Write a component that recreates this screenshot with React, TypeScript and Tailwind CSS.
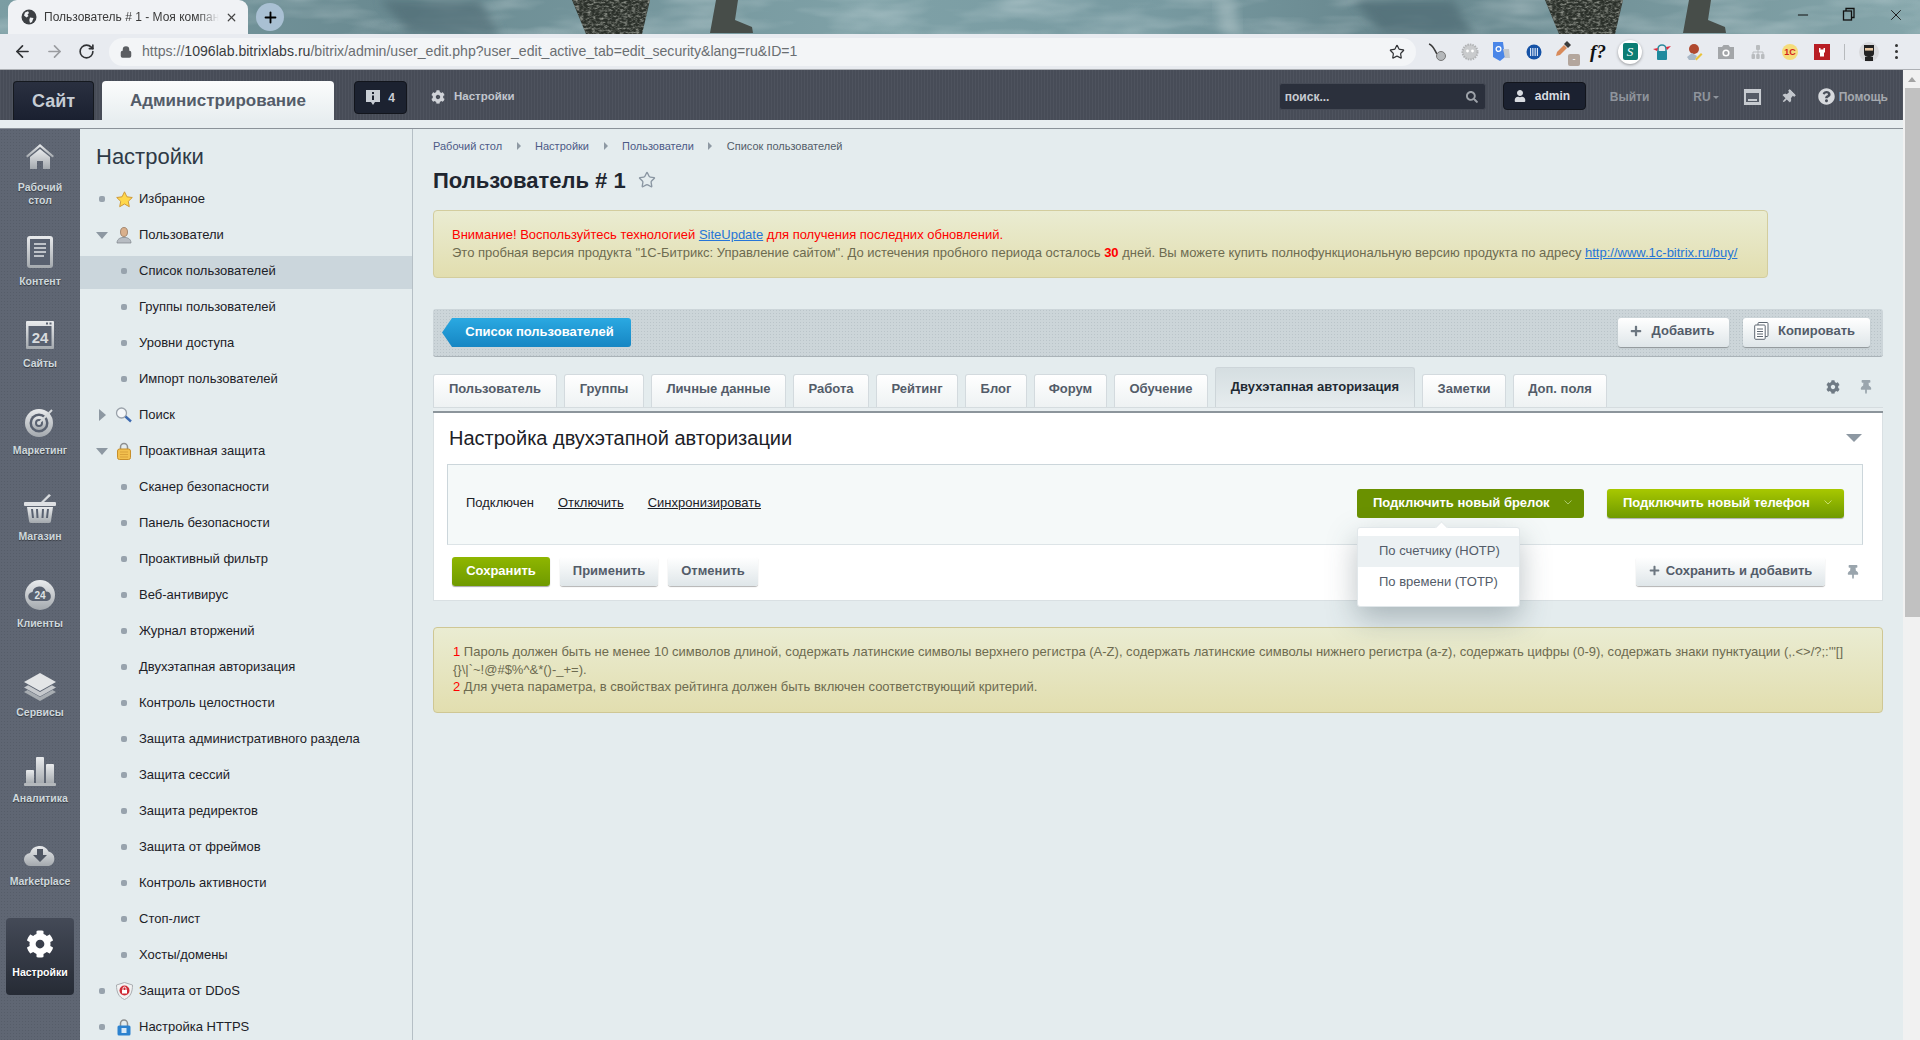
import type { ReactNode } from 'react';
import { ArrowLeft, ArrowRight, RotateCw, Lock, Star, X, Plus, Minus } from 'lucide-react';
import { FaCog, FaThumbtack, FaUser, FaSearch, FaQuestionCircle, FaPlus } from 'react-icons/fa';

const Arial = '[font-family:"Liberation_Sans",Arial,sans-serif]';

// chrome theme picture, one tile is repeated along the strip
function ThemeArt() {
  return (
    <svg className="w-full h-full" viewBox="0 0 1920 34" preserveAspectRatio="none">
      <defs>
        <linearGradient id="sky" x1="0" y1="0" x2="1" y2="0">
          <stop offset="0" stopColor="#7b9da3" />
          <stop offset="0.2" stopColor="#6a8a91" />
          <stop offset="0.45" stopColor="#7fa1a7" />
          <stop offset="0.6" stopColor="#789aa1" />
          <stop offset="0.72" stopColor="#68878e" />
          <stop offset="1" stopColor="#84a5aa" />
        </linearGradient>
        <filter id="soft">
          <feGaussianBlur stdDeviation="5" />
        </filter>
        <filter id="feather" x="0" y="0" width="100%" height="100%">
          <feTurbulence type="fractalNoise" baseFrequency="0.25 0.5" numOctaves="2" seed="4" />
          <feColorMatrix values="0 0 0 0 0.45  0 0 0 0 0.47  0 0 0 0 0.42  1.8 0 0 0 -0.75" />
          <feComposite in2="SourceAlpha" operator="in" />
        </filter>
        <filter id="mottle" x="0" y="0" width="100%" height="100%">
          <feTurbulence type="fractalNoise" baseFrequency="0.012 0.05" numOctaves="3" seed="9" />
          <feColorMatrix values="0 0 0 0 0.85  0 0 0 0 0.92  0 0 0 0 0.93  1.4 0 0 0 -0.55" />
        </filter>
      </defs>
      <rect width="1920" height="34" fill="url(#sky)" />
      <rect width="1920" height="34" filter="url(#mottle)" opacity="0.45" />
      {[0, 973].map((dx) => (
        <g key={dx} transform={`translate(${dx} 0)`}>
          <polygon points="380,0 480,0 500,34 410,34" fill="#4f6c75" opacity="0.7" filter="url(#soft)" />
          <polygon points="572,0 650,0 642,34 586,34" fill="#2b302a" />
          <polygon points="572,0 650,0 642,34 586,34" fill="#000" filter="url(#feather)" />
          <polygon points="716,0 738,0 735,20 752,27 753,33 710,33 712,22" fill="#474d49" />
          <polygon points="1215,0 1235,0 1240,34 1222,34" fill="#b4c8cb" opacity="0.5" filter="url(#soft)" />
        </g>
      ))}
    </svg>
  );
}

function BrowserTab() {
  return (
    <div className="relative h-[34px] overflow-hidden">
      <div className="absolute inset-0">
        <ThemeArt />
      </div>
      <div className="absolute inset-0 flex items-end pl-[8px]">
        <div className="w-[240px] h-[34px] bg-[#f0f2f5] rounded-t-[9px] flex items-center pl-[13px] pr-[10px]">
          <svg width="16" height="16" viewBox="0 0 16 16">
            <circle cx="8" cy="8" r="7.5" fill="#3c3f43" />
            <path d="M4 3.5l3-1.2 1 1.6-1.500 1.600L7.500 7 5.500 8.500 3 6.500zM9 8.500l3.500.4L11 13l-2 1-.7-3z" fill="#f0f2f5" />
          </svg>
          <span className={`ml-[7px] w-[175px] text-[12px] text-[#3a3a3a] whitespace-nowrap [mask-image:linear-gradient(90deg,#000_88%,transparent)] ${Arial}`}>
            Пользователь # 1 - Моя компан
          </span>
          <X size={13} className="ml-auto text-[#444]" strokeWidth={2.2} />
        </div>
        <div className="ml-[8px] mb-[3px] w-[28px] h-[28px] rounded-full bg-[#a9c0d3] flex items-center justify-center">
          <Plus size={17} strokeWidth={2.6} className="text-black" />
        </div>
        <div className="ml-auto h-[34px] flex items-start pt-[6px] pr-[15px] gap-[31px] text-[#111]">
          <Minus size={16} strokeWidth={1.5} className="mt-[1px]" />
          <svg width="14" height="16" viewBox="0 0 14 16" className="mt-[1px]" fill="none" stroke="#111" strokeWidth="1.3">
            <rect x="1.5" y="4" width="8" height="9" />
            <path d="M4 4V1.5h8v9h-2.5" />
          </svg>
          <X size={18} strokeWidth={1.2} />
        </div>
      </div>
    </div>
  );
}

// the row of extension buttons, each box is 32px wide
function Extensions() {
  return (
    <div className="flex items-center ml-[6px]">
      <ExtBox>
        <svg width="20" height="20" viewBox="0 0 20 20" fill="none">
          <path d="M1 2c4 1 5 5 8 10" stroke="#3a3a3a" strokeWidth="1.6" />
          <circle cx="13" cy="14" r="4.5" fill="#b4b7ba" stroke="#777" />
        </svg>
      </ExtBox>
      <ExtBox>
        <svg width="18" height="18" viewBox="0 0 18 18">
          <circle cx="9" cy="9" r="7.5" fill="#c9cbcd" stroke="#b0b2b4" strokeDasharray="1.5 1" strokeWidth="2" />
          <circle cx="6.5" cy="8" r="1.4" fill="#fff" />
          <circle cx="11.5" cy="8" r="1.4" fill="#fff" />
        </svg>
      </ExtBox>
      <ExtBox>
        <svg width="18" height="20" viewBox="0 0 18 20">
          <path d="M0 0h10l2 15-5 4-7-4z" fill="#4a86e8" />
          <path d="M10 7h6l1 9H12z" fill="#c5c9cd" />
          <circle cx="5.5" cy="7" r="2.4" fill="none" stroke="#fff" strokeWidth="1.3" />
        </svg>
      </ExtBox>
      <ExtBox>
        <svg width="16" height="16" viewBox="0 0 16 16">
          <circle cx="8" cy="8" r="7.5" fill="#1552a6" />
          <path d="M4 4h8v8H4z" fill="#d8e4f5" />
          <path d="M5.7 4v8M8 4v8M10.3 4v8" stroke="#1552a6" strokeWidth="1.1" />
        </svg>
      </ExtBox>
      <ExtBox>
        <div className="relative w-[22px] h-[22px]">
          <svg width="16" height="16" viewBox="0 0 16 16">
            <path d="M1 15l1-4 7-7 3 3-7 7z" fill="#d88a5a" />
            <path d="M9 3l3-3 4 4-3 3z" fill="#3b3b3b" />
          </svg>
          <span className={`absolute right-[-3px] bottom-[-3px] w-[12px] h-[12px] rounded-[2px] bg-[#b3a69d] text-white text-[9px] leading-[11px] text-center ${Arial}`}>-</span>
        </div>
      </ExtBox>
      <ExtBox>
        <span className="text-[19px] italic text-[#111] [font-family:'Liberation_Serif',serif] font-bold leading-none">f?</span>
      </ExtBox>
      <ExtBox>
        <div className="w-[24px] h-[24px] rounded-full bg-white shadow-[0_1px_3px_rgba(0,0,0,.35)] flex items-center justify-center">
          <span className="w-[15px] h-[17px] rounded-[2px] bg-[#0b7d73] text-white text-[13px] leading-[17px] text-center italic [font-family:'Liberation_Serif',serif]">S</span>
        </div>
      </ExtBox>
      <ExtBox>
        <svg width="18" height="18" viewBox="0 0 18 18">
          <path d="M5 9V6a4 4 0 0 1 8 0v3" fill="none" stroke="#2a8a9c" strokeWidth="1.6" />
          <rect x="4" y="8" width="10" height="9" rx="1" fill="#1f8a9e" />
          <path d="M0 6l5-1-1 3zM18 3l-5 1 1 3z" fill="#e0293a" />
        </svg>
      </ExtBox>
      <ExtBox>
        <svg width="18" height="18" viewBox="0 0 18 18">
          <circle cx="9" cy="6" r="5" fill="#b0492f" />
          <path d="M2 14l5-4 5 3-2 4H4z" fill="#a9b8c7" />
          <path d="M10 16l6-6 1.5 1.5-6 6z" fill="#e9c33c" />
        </svg>
      </ExtBox>
      <ExtBox>
        <svg width="18" height="16" viewBox="0 0 18 16">
          <path d="M1 3h4l1.5-2h5L13 3h4v12H1z" fill="#a3a6a9" />
          <circle cx="9" cy="9" r="3.6" fill="#fff" />
          <circle cx="9" cy="9" r="2" fill="#a3a6a9" />
        </svg>
      </ExtBox>
      <ExtBox>
        <svg width="14" height="16" viewBox="0 0 14 16" fill="#b9bcbf">
          <rect x="5" y="1" width="4" height="5" rx="1" />
          <rect x="0.5" y="10" width="3.5" height="5" rx="1" />
          <rect x="5.2" y="10" width="3.5" height="5" rx="1" />
          <rect x="10" y="10" width="3.5" height="5" rx="1" />
          <path d="M7 6v4M2 10V8h10v2" fill="none" stroke="#b9bcbf" />
        </svg>
      </ExtBox>
      <ExtBox>
        <div className={`w-[16px] h-[16px] rounded-full bg-[#f5dc7a] text-[#d2231c] font-bold text-[9px] leading-[16px] text-center ${Arial}`}>1С</div>
      </ExtBox>
      <ExtBox>
        <svg width="16" height="16" viewBox="0 0 16 16">
          <rect width="16" height="16" fill="#b81d24" />
          <path d="M5 4h1.500v1.500h3V4H11v4l-1 1v3.500H6V9L5 8z" fill="#fff" />
        </svg>
      </ExtBox>
      <div className="w-px h-[16px] bg-[#b7babd] ml-[6px]" />
      <div className="ml-[14px] w-[20px] h-[20px] rounded-full bg-[#d8d9dc] flex items-center justify-center">
        <svg width="14" height="18" viewBox="0 0 14 18">
          <path d="M2 2h10v8c0 3-2 4-5 4s-5-1-5-4z" fill="#222" />
          <rect x="3" y="5" width="8" height="2.6" fill="#e8c9a5" />
          <path d="M3 14h8v4H3z" fill="#222" />
        </svg>
      </div>
      <div className="ml-[16px] flex flex-col gap-[3px]">
        <span className="w-[3px] h-[3px] rounded-full bg-[#333]" />
        <span className="w-[3px] h-[3px] rounded-full bg-[#333]" />
        <span className="w-[3px] h-[3px] rounded-full bg-[#333]" />
      </div>
    </div>
  );
}

function ExtBox({ children }: { children: ReactNode }) {
  return <div className="w-[32px] h-[36px] flex items-center justify-center">{children}</div>;
}

function BrowserBar() {
  return (
    <div className="h-[36px] bg-[#e8ebf0] border-b border-[#adb0b5] flex items-center pl-[13px]">
      <ArrowLeft size={19} strokeWidth={2.1} className="text-[#303235]" />
      <ArrowRight size={19} strokeWidth={2.1} className="ml-[13px] text-[#9a9ca0]" />
      <RotateCw size={17} strokeWidth={2.3} className="ml-[14px] text-[#303235]" />
      <div className="ml-[14px] w-[1307px] h-[28px] rounded-full bg-[#f3f5f7] flex items-center pl-[11px] pr-[10px]">
        <Lock size={12} strokeWidth={3} className="text-[#5b5e62] fill-[#5b5e62]" />
        <span className={`ml-[10px] pt-[1px] text-[14.1px] text-[#6a6e72] whitespace-nowrap ${Arial}`}>
          https://<span className="text-[#3a3c3f]">1096lab.bitrixlabs.ru</span>/bitrix/admin/user_edit.php?user_edit_active_tab=edit_security&amp;lang=ru&amp;ID=1
        </span>
        <Star size={16} strokeWidth={1.8} className="ml-auto mr-[1px] text-[#303235]" />
      </div>
      <Extensions />
    </div>
  );
}

function AdminHeader() {
  return (
    <div className={`h-[50px] flex bg-[#4a4f5a] bg-[repeating-linear-gradient(90deg,#4e535e_0_1px,#474c57_1px_3px)] pl-[13px] pr-[15px] ${Arial}`}>
      <div className="self-end w-[81px] h-[39px] rounded-t-[4px] bg-gradient-to-b from-[#2a3040] to-[#1a2030] border border-b-0 border-[#15191f] flex items-center justify-center text-[18px] font-bold text-[#c6ccd4]">
        Сайт
      </div>
      <div className="self-end ml-[8px] w-[232px] h-[39px] rounded-t-[4px] bg-gradient-to-b from-[#fbfcfc] to-[#e8eef0] flex items-center justify-center text-[17px] font-bold text-[#535c69]">
        Администрирование
      </div>
      <div className="mt-[11px] ml-[20px] w-[53px] h-[33px] rounded-[4px] bg-[#1c2230] border border-[#12151c] flex items-center justify-center gap-[8px] text-[12px] font-bold text-[#c9ced5]">
        <svg width="14" height="17" viewBox="0 0 14 17">
          <path d="M0 1h14v12H9l-2 3-2-3H0z" fill="#c9ced5" />
          <path d="M6 3h2v2H6zM6 6.500h2V11H6z" fill="#1c2230" />
        </svg>
        4
      </div>
      <div className="mt-[10px] ml-[24px] h-[33px] flex items-center text-[11.5px] font-bold text-[#c2c6cd]">
        <FaCog size={14} className="text-[#d0d3d8]" />
        <span className="ml-[9px]">Настройки</span>
      </div>
      <div className="mt-[13px] ml-auto w-[207px] h-[27px] rounded-[3px] bg-[#2b303c] border border-[#454a55] flex items-center pl-[5px] pr-[7px] text-[12px] font-bold text-[#c8ccd2]">
        поиск...
        <FaSearch size={12} className="ml-auto text-[#9da2a9]" />
      </div>
      <div className="mt-[12px] ml-[17px] w-[83px] h-[28px] rounded-[4px] bg-[#1b2130] border border-[#12151c] flex items-center pl-[10px] text-[12px] font-bold text-[#d9dce1]">
        <FaUser size={12} />
        <span className="ml-[9px]">admin</span>
      </div>
      <div className="mt-[20px] ml-[24px] h-[14px] text-[12px] leading-[14px] font-bold text-[#8f949c]">Выйти</div>
      <div className="mt-[20px] ml-[44px] h-[14px] text-[12px] leading-[14px] font-bold text-[#8f949c] flex items-center">
        RU
        <span className="ml-[2px] w-0 h-0 border-x-[3px] border-x-transparent border-t-[3px] border-t-[#8f949c]" />
      </div>
      <div className="mt-[19px] ml-[25px] w-[17px] h-[16px] bg-[#c7cbd0] flex items-center justify-center">
        <div className="w-[13px] h-[9px] bg-[#555b66] flex items-end justify-center pb-[1px]">
          <div className="w-[9px] h-[2px] bg-[#c7cbd0]" />
        </div>
      </div>
      <FaThumbtack size={14} className="mt-[20px] ml-[20px] text-[#c2c6cc] rotate-45" />
      <FaQuestionCircle size={17} className="mt-[18px] ml-[23px] text-[#d6d9dd]" />
      <div className="mt-[20px] ml-[4px] h-[14px] text-[12px] leading-[14px] font-bold text-[#a4a8ae]">Помощь</div>
    </div>
  );
}

// side rail icons
function HomeIcon() {
  return (
    <svg width="30" height="30" viewBox="0 0 30 30">
      <defs>
        <linearGradient id="rail" x1="0" y1="0" x2="0" y2="1">
          <stop offset="0" stopColor="#e9ebed" />
          <stop offset="1" stopColor="#a4a9ae" />
        </linearGradient>
      </defs>
      <path d="M15 2L1 14l1.500 1.500L15 5l12.500 10.500L29 14z" fill="url(#rail)" />
      <path d="M5 15L15 7l10 8v12H18v-8h-6v8H5z" fill="url(#rail)" />
    </svg>
  );
}
function ContentIcon() {
  return (
    <svg width="26" height="32" viewBox="0 0 26 32">
      <rect width="26" height="32" rx="3" fill="url(#rail)" />
      <rect x="3" y="3" width="20" height="26" fill="#596170" />
      <path d="M7 8h12M7 12h12M7 16h12M7 20h10" stroke="#dfe2e5" strokeWidth="1.7" />
    </svg>
  );
}
function SitesIcon() {
  return (
    <svg width="28" height="28" viewBox="0 0 28 28">
      <rect width="28" height="28" rx="1" fill="url(#rail)" />
      <rect x="2.5" y="5" width="23" height="20" fill="#596170" />
      <rect x="20" y="1.5" width="2" height="2" fill="#596170" />
      <rect x="23.5" y="1.5" width="2" height="2" fill="#596170" />
      <text x="14" y="21.5" textAnchor="middle" fontSize="15" fontWeight="700" fill="#d8dbde" fontFamily="Liberation Sans">24</text>
    </svg>
  );
}
function TargetIcon() {
  return (
    <svg width="30" height="30" viewBox="0 0 30 30">
      <circle cx="14" cy="16" r="14" fill="url(#rail)" />
      <circle cx="14" cy="16" r="9.5" fill="#596170" />
      <circle cx="14" cy="16" r="7" fill="url(#rail)" />
      <circle cx="14" cy="16" r="4" fill="#596170" />
      <circle cx="14" cy="16" r="2" fill="#d5d8db" />
      <path d="M14 16L27 3" stroke="#d5d8db" strokeWidth="2" />
    </svg>
  );
}
function BasketIcon() {
  return (
    <svg width="32" height="30" viewBox="0 0 32 30">
      <path d="M16 10L25 1l2 1.500L19 10z" fill="#d8dbde" />
      <rect y="9" width="32" height="4" rx="1" fill="#dfe1e4" />
      <path d="M3 14h26l-2 14a2 2 0 0 1-2 2H7a2 2 0 0 1-2-2z" fill="url(#rail)" />
      <path d="M8 16l1 9M13 16l.5 9M19 16l-.5 9M24 16l-1 9" stroke="#596170" strokeWidth="2" />
    </svg>
  );
}
function CloudBadgeIcon() {
  return (
    <svg width="30" height="30" viewBox="0 0 30 30">
      <circle cx="15" cy="15" r="15" fill="url(#rail)" />
      <path d="M8 21a4.500 4.500 0 0 1-.5-9 7 7 0 0 1 13.500-.5A4.800 4.800 0 0 1 22 21z" fill="#596170" />
      <text x="15" y="19" textAnchor="middle" fontSize="10" fontWeight="700" fill="#dfe1e4" fontFamily="Liberation Sans">24</text>
    </svg>
  );
}
function LayersIcon() {
  return (
    <svg width="32" height="30" viewBox="0 0 32 30">
      <path d="M16 10L32 19 16 28 0 19z" fill="#a8adb2" />
      <path d="M16 6L32 15 16 24 0 15z" fill="#596170" />
      <path d="M16 5.500L32 14.500 16 23.500 0 14.500z" fill="#c6c9cd" />
      <path d="M16 1L32 10 16 19 0 10z" fill="#596170" />
      <path d="M16 0L32 9 16 18 0 9z" fill="#e3e5e7" />
    </svg>
  );
}
function BarsIcon() {
  return (
    <svg width="32" height="30" viewBox="0 0 32 30">
      <rect x="2" y="14" width="8" height="14" rx="1" fill="url(#rail)" />
      <rect x="12" y="1" width="8" height="27" rx="1" fill="url(#rail)" />
      <rect x="22" y="8" width="8" height="20" rx="1" fill="url(#rail)" />
      <rect y="27" width="32" height="3" rx="1" fill="#b4b8bc" />
    </svg>
  );
}
function CloudDownIcon() {
  return (
    <svg width="32" height="24" viewBox="0 0 32 24">
      <path d="M7 23a6.500 6.500 0 0 1-1-13A10 10 0 0 1 24.500 8.500 7.500 7.500 0 0 1 25 23z" fill="url(#rail)" />
      <path d="M13 6h6v6h4l-7 7-7-7h4z" fill="#4f5663" />
    </svg>
  );
}

interface RailItem {
  label: ReactNode;
  icon: ReactNode;
  gap: string;
  labelGap: string;
}

const railItems: RailItem[] = [
  { label: <>Рабочий<br />стол</>, icon: <HomeIcon />, gap: 'mt-[8px]', labelGap: 'mt-[4px]' },
  { label: 'Контент', icon: <ContentIcon />, gap: 'mt-[25px]', labelGap: 'mt-[3px]' },
  { label: 'Сайты', icon: <SitesIcon />, gap: 'mt-[27px]', labelGap: 'mt-[2px]' },
  { label: 'Маркетинг', icon: <TargetIcon />, gap: 'mt-[32px]', labelGap: 'mt-[2px]' },
  { label: 'Магазин', icon: <BasketIcon />, gap: 'mt-[31px]', labelGap: 'mt-[2px]' },
  { label: 'Клиенты', icon: <CloudBadgeIcon />, gap: 'mt-[32px]', labelGap: 'mt-[2px]' },
  { label: 'Сервисы', icon: <LayersIcon />, gap: 'mt-[38px]', labelGap: 'mt-[-2px]' },
  { label: 'Аналитика', icon: <BarsIcon />, gap: 'mt-[32px]', labelGap: 'mt-[1px]' },
  { label: 'Marketplace', icon: <CloudDownIcon />, gap: 'mt-[30px]', labelGap: 'mt-[0px]' },
];

function SideRail() {
  return (
    <div className={`w-[80px] shrink-0 bg-[#5f6673] bg-[radial-gradient(#565d69_0.8px,transparent_0.9px)] bg-[length:3px_3px] flex flex-col items-center ${Arial}`}>
      {railItems.map((item, i) => (
        <div key={i} className={`${item.gap} flex flex-col items-center`}>
          <div className="h-[40px] flex items-center justify-center">{item.icon}</div>
          <div className={`${item.labelGap} text-[10.5px] leading-[13px] font-bold text-center text-[#cfd8dc] [text-shadow:0_1px_1px_rgba(0,0,0,.45)]`}>{item.label}</div>
        </div>
      ))}
      <div className="mt-[30px] w-[68px] h-[77px] rounded-[4px] bg-gradient-to-b from-[#444a57] to-[#262b35] flex flex-col items-center pt-[6px]">
        <div className="h-[40px] flex items-center justify-center">
          <FaCog size={28} className="text-white" />
        </div>
        <div className="mt-[2px] text-[10.5px] leading-[13px] font-bold text-white [text-shadow:0_1px_1px_rgba(0,0,0,.45)]">Настройки</div>
      </div>
    </div>
  );
}

// nav tree
function Bullet() {
  return <span className="block w-[6px] h-[6px] rounded-[2px] bg-[#98a3ad]" />;
}
function TriDown() {
  return <span className="block w-0 h-0 border-x-[6px] border-x-transparent border-t-[7px] border-t-[#8d98a2]" />;
}
function TriRight() {
  return <span className="block w-0 h-0 border-y-[6px] border-y-transparent border-l-[7px] border-l-[#8d98a2]" />;
}

const navIcons: Record<string, ReactNode> = {
  star: (
    <svg width="17" height="17" viewBox="0 0 17 17">
      <path d="M8.500 .8l2.400 5 5.400.7-4 3.800 1 5.400-4.800-2.700-4.800 2.700 1-5.400-4-3.800 5.400-.7z" fill="#ffd84a" stroke="#cf9a3a" />
    </svg>
  ),
  user: (
    <svg width="16" height="17" viewBox="0 0 16 17">
      <ellipse cx="8" cy="5" rx="3.500" ry="4.500" fill="#d9b08c" stroke="#8a6a50" strokeWidth=".7" />
      <path d="M1 16c0-4 3-5 5-5.500h4c2 .5 5 1.500 5 5.500z" fill="#b7bcc2" stroke="#7b8288" strokeWidth=".7" />
    </svg>
  ),
  search: (
    <svg width="18" height="16" viewBox="0 0 18 16">
      <circle cx="6.500" cy="6" r="5" fill="#f4f7f9" stroke="#9aa2aa" strokeWidth="1.300" />
      <path d="M10.500 9.500l5.500 5" stroke="#3d6ab0" strokeWidth="2.400" />
    </svg>
  ),
  lock: (
    <svg width="14" height="18" viewBox="0 0 14 18">
      <path d="M3.500 8V5a3.500 3.500 0 0 1 7 0v3" fill="none" stroke="#8d8f8f" strokeWidth="1.500" />
      <rect x=".5" y="7" width="13" height="10.500" rx="2" fill="#f2c04e" stroke="#c78f2a" />
      <path d="M3 10h8M3 12.500h8M3 15h8" stroke="#d9a23a" />
    </svg>
  ),
  shield: (
    <svg width="17" height="18" viewBox="0 0 17 18">
      <path d="M8.500 .5L16.500 3c0 7-2 12-8 14.500C2.500 15 .5 10 .5 3z" fill="#f2f2f2" stroke="#a9adb1" />
      <circle cx="8.500" cy="8.500" r="5" fill="#cf2a35" />
      <rect x="6" y="8" width="5" height="3.500" fill="#fff" />
      <path d="M7 8V6.500a1.500 1.500 0 0 1 3 0V8" fill="none" stroke="#fff" />
    </svg>
  ),
  https: (
    <svg width="14" height="17" viewBox="0 0 14 17">
      <path d="M3.500 7V4.500a3.500 3.500 0 0 1 7 0V7" fill="none" stroke="#8d8f8f" strokeWidth="1.500" />
      <rect x=".5" y="6.500" width="13" height="10" rx="1.500" fill="#2c82cf" />
      <rect x="4.500" y="9" width="5" height="5" fill="#d7e8f7" />
    </svg>
  ),
};

interface NavRow {
  text: string;
  mark: 'bullet' | 'down' | 'right' | 'sub';
  icon?: string;
  active?: boolean;
}

const navRows: NavRow[] = [
  { text: 'Избранное', mark: 'bullet', icon: 'star' },
  { text: 'Пользователи', mark: 'down', icon: 'user' },
  { text: 'Список пользователей', mark: 'sub', active: true },
  { text: 'Группы пользователей', mark: 'sub' },
  { text: 'Уровни доступа', mark: 'sub' },
  { text: 'Импорт пользователей', mark: 'sub' },
  { text: 'Поиск', mark: 'right', icon: 'search' },
  { text: 'Проактивная защита', mark: 'down', icon: 'lock' },
  { text: 'Сканер безопасности', mark: 'sub' },
  { text: 'Панель безопасности', mark: 'sub' },
  { text: 'Проактивный фильтр', mark: 'sub' },
  { text: 'Веб-антивирус', mark: 'sub' },
  { text: 'Журнал вторжений', mark: 'sub' },
  { text: 'Двухэтапная авторизация', mark: 'sub' },
  { text: 'Контроль целостности', mark: 'sub' },
  { text: 'Защита административного раздела', mark: 'sub' },
  { text: 'Защита сессий', mark: 'sub' },
  { text: 'Защита редиректов', mark: 'sub' },
  { text: 'Защита от фреймов', mark: 'sub' },
  { text: 'Контроль активности', mark: 'sub' },
  { text: 'Стоп-лист', mark: 'sub' },
  { text: 'Хосты/домены', mark: 'sub' },
  { text: 'Защита от DDoS', mark: 'bullet', icon: 'shield' },
  { text: 'Настройка HTTPS', mark: 'bullet', icon: 'https' },
];

function NavPanel() {
  return (
    <div className={`w-[333px] shrink-0 bg-[#e4ecee] border-r border-[#b5bfc5] overflow-hidden ${Arial}`}>
      <div className="pl-[16px] pt-[15px] h-[55px] text-[22px] leading-[26px] text-[#2e3a46]">Настройки</div>
      {navRows.map((row) => (
        <div key={row.text} className={`h-[33px] mb-[3px] pb-[3px] flex items-center text-[13px] text-[#1c2127] ${row.active ? 'bg-[#cbd6dc]' : ''}`}>
          <div className="w-[29px] pl-[16px] flex justify-start">
            {row.mark === 'bullet' && <span className="ml-[3px]"><Bullet /></span>}
            {row.mark === 'down' && <TriDown />}
            {row.mark === 'right' && <span className="ml-[3px]"><TriRight /></span>}
          </div>
          <div className="w-[30px] flex justify-center">
            {row.mark === 'sub' ? <Bullet /> : navIcons[row.icon!]}
          </div>
          <span>{row.text}</span>
        </div>
      ))}
    </div>
  );
}

const crumbs = ['Рабочий стол', 'Настройки', 'Пользователи'];

function Breadcrumbs() {
  return (
    <div className="mt-[10px] h-[14px] flex items-center text-[11px] text-[#4c5a86]">
      {crumbs.map((c) => (
        <span key={c} className="flex items-center">
          {c}
          <span className="mx-[14.5px] w-0 h-0 border-y-[4px] border-y-transparent border-l-[4px] border-l-[#8e99a3]" />
        </span>
      ))}
      <span className="text-[#535c69]">Список пользователей</span>
    </div>
  );
}

function GreyButton({ children, className = '' }: { children: ReactNode; className?: string }) {
  return (
    <div className={`h-[29px] rounded-[3px] bg-gradient-to-b from-white to-[#dfe6e9] shadow-[0_1px_1px_rgba(0,0,0,.3)] flex items-center justify-center text-[13px] font-bold text-[#535c69] ${className}`}>
      {children}
    </div>
  );
}

const tabs = [
  { text: 'Пользователь', w: 'w-[124px]' },
  { text: 'Группы', w: 'w-[80px]' },
  { text: 'Личные данные', w: 'w-[135px]' },
  { text: 'Работа', w: 'w-[76px]' },
  { text: 'Рейтинг', w: 'w-[82px]' },
  { text: 'Блог', w: 'w-[62px]' },
  { text: 'Форум', w: 'w-[73px]' },
  { text: 'Обучение', w: 'w-[94px]' },
];

function Tabs() {
  return (
    <div className="mt-[10px] h-[40px] flex items-end gap-[7px]">
      {tabs.map((t) => (
        <div key={t.text} className={`${t.w} h-[33px] pb-[5px] rounded-t-[3px] border border-b-0 border-[#d3dade] bg-gradient-to-b from-white to-[#eef2f3] flex items-center justify-center text-[13px] font-bold text-[#535c69]`}>
          {t.text}
        </div>
      ))}
      <div className="w-[200px] h-[40px] pb-[1px] rounded-t-[3px] border border-b-0 border-[#cdd5d9] bg-gradient-to-b from-[#d5dee1] to-[#e6ecee] flex items-center justify-center text-[13px] font-bold text-[#1f2a33]">
        Двухэтапная авторизация
      </div>
      <div className="w-[84px] h-[33px] pb-[5px] rounded-t-[3px] border border-b-0 border-[#d3dade] bg-gradient-to-b from-white to-[#eef2f3] flex items-center justify-center text-[13px] font-bold text-[#535c69]">
        Заметки
      </div>
      <div className="w-[94px] h-[33px] pb-[5px] rounded-t-[3px] border border-b-0 border-[#d3dade] bg-gradient-to-b from-white to-[#eef2f3] flex items-center justify-center text-[13px] font-bold text-[#535c69]">
        Доп. поля
      </div>
      <FaCog size={14} className="ml-auto mb-[13px] text-[#6f7a84]" />
      <FaThumbtack size={14} className="ml-[12px] mr-[10px] mb-[13px] text-[#9aa5ad]" />
    </div>
  );
}

function ConnectMenu() {
  return (
    <div className="absolute left-0 top-[38px] z-10 w-[163px] h-[80px] rounded-[3px] bg-white border border-[#e1e7ea] pt-[8px] shadow-[0_12px_30px_rgba(60,80,90,.35)] text-[13px] text-[#535c69]">
      <span className="absolute left-[79px] top-[-5px] w-[9px] h-[9px] rotate-45 bg-white border-l border-t border-[#e1e7ea]" />
      <div className="h-[31px] bg-[#ecf1f3] flex items-center pl-[21px]">По счетчику (HOTP)</div>
      <div className="h-[31px] flex items-center pl-[21px]">По времени (TOTP)</div>
    </div>
  );
}

function SecurityPanel() {
  return (
    <div className="bg-white border-x border-b border-[#d9e0e3] h-[188px]">
      <div className="h-[51px] pb-[2px] flex items-center pl-[15px] pr-[20px]">
        <span className="text-[20px] text-[#1c2127]">Настройка двухэтапной авторизации</span>
        <span className="ml-auto w-0 h-0 border-x-[8px] border-x-transparent border-t-[8px] border-t-[#8d98a2]" />
      </div>
      <div className="ml-[13px] mr-[19px] h-[81px] pb-[3px] bg-[#f5f9f9] border border-[#ccd6db] border-b-[#dde4e7] flex items-center pl-[18px] pr-[18px] text-[13px] text-[#1c2127]">
        <span>Подключен</span>
        <a className="ml-[24px] underline">Отключить</a>
        <a className="ml-[24px] underline">Синхронизировать</a>
        <div className="relative ml-auto">
          <div className="w-[227px] h-[29px] pb-[1px] rounded-[3px] bg-[#6a9100] flex items-center pl-[16px] text-[13px] font-bold text-white">
            Подключить новый брелок
            <svg width="8" height="5" viewBox="0 0 8 5" className="ml-auto mr-[12px]" fill="none" stroke="#a9c76a"><path d="M.5.500L4 4 7.500.500" /></svg>
          </div>
          <ConnectMenu />
        </div>
        <div className="ml-[23px] w-[237px] h-[29px] pb-[1px] rounded-[3px] bg-gradient-to-b from-[#a8c800] to-[#6f9a00] shadow-[0_1px_1px_rgba(0,0,0,.3)] flex items-center pl-[16px] text-[13px] font-bold text-white">
          Подключить новый телефон
          <svg width="8" height="5" viewBox="0 0 8 5" className="ml-auto mr-[12px]" fill="none" stroke="#c8dd6e"><path d="M.5.500L4 4 7.500.500" /></svg>
        </div>
      </div>
      <div className="mt-[12px] pl-[18px] pr-[22px] flex items-center">
        <div className="w-[98px] h-[29px] pb-[2px] rounded-[3px] bg-gradient-to-b from-[#8fb600] to-[#6f9a00] shadow-[0_1px_1px_rgba(0,0,0,.35)] flex items-center justify-center text-[13px] font-bold text-white">
          Сохранить
        </div>
        <GreyButton className="ml-[10px] w-[98px] pb-[2px]">Применить</GreyButton>
        <GreyButton className="ml-[10px] w-[90px] pb-[2px]">Отменить</GreyButton>
        <GreyButton className="ml-auto w-[189px] pb-[2px]">
          <FaPlus size={11} className="mr-[6px] text-[#6c7680]" />
          Сохранить и добавить
        </GreyButton>
        <FaThumbtack size={14} className="ml-[21px] text-[#9aa5ad]" />
      </div>
    </div>
  );
}

function Content() {
  return (
    <div className={`flex-1 bg-[#e4ecee] pl-[20px] pr-[20px] overflow-hidden ${Arial}`}>
      <Breadcrumbs />
      <div className="mt-[12px] h-[30px] flex items-center">
        <span className="text-[22px] font-bold text-[#1f2630]">Пользователь # 1</span>
        <Star size={18} strokeWidth={1.8} className="ml-[12px] text-[#8a96a2]" />
      </div>
      <div className="mt-[15px] w-[1335px] h-[68px] rounded-[4px] border border-[#d3cd9e] bg-gradient-to-b from-[#eaecd2] to-[#e2deaf] pl-[18px] pt-[15px] text-[13px] leading-[18px] text-[#6d6b50] whitespace-nowrap">
        <div className="text-[#f00]">
          Внимание! Воспользуйтесь технологией <a className="text-[#2675d7] underline">SiteUpdate</a> для получения последних обновлений.
        </div>
        <div>
          Это пробная версия продукта "1С-Битрикс: Управление сайтом". До истечения пробного периода осталось <b className="text-[#f00]">30</b> дней. Вы можете купить полнофункциональную версию продукта по адресу <a className="text-[#2675d7] underline">http://www.1c-bitrix.ru/buy/</a>
        </div>
      </div>
      <div className="mt-[31px] h-[48px] rounded-[3px] border-b border-[#aab3b8] bg-[#ccd5d9] bg-[radial-gradient(#bac4c9_0.8px,transparent_0.9px)] bg-[length:3px_3px] flex items-center pl-[9px] pr-[13px]">
        <div className="w-[189px] h-[29px] pb-[1px] rounded-r-[3px] bg-gradient-to-b from-[#2aa9e2] to-[#1686c3] [clip-path:polygon(10px_0,100%_0,100%_100%,10px_100%,0_50%)] flex items-center justify-center pl-[6px] text-[13px] font-bold text-white">
          Список пользователей
        </div>
        <GreyButton className="ml-auto w-[111px] pr-[3px] pb-[4px]">
          <FaPlus size={12} className="mr-[10px] text-[#6c7680]" />
          Добавить
        </GreyButton>
        <GreyButton className="ml-[14px] w-[127px] pr-[4px] pb-[4px]">
          <svg width="15" height="18" viewBox="0 0 15 18" className="mr-[9px]">
            <rect x="4" y=".5" width="10" height="14" rx="1" fill="#fff" stroke="#5d6670" />
            <rect x=".7" y="3" width="10.500" height="14.300" rx="1" fill="#fff" stroke="#5d6670" />
            <path d="M3 7h6M3 9.500h6M3 12h6M3 14.500h6" stroke="#5d6670" />
          </svg>
          Копировать
        </GreyButton>
      </div>
      <Tabs />
      <div className="h-[4px] bg-[#e8eef0] border-t border-[#d5dcdf]" />
      <div className="h-[2px] bg-[#8c959b]" />
      <SecurityPanel />
      <div className="mt-[26px] h-[86px] rounded-[4px] border border-[#cfc794] bg-gradient-to-b from-[#eaecd2] to-[#e2deaf] pl-[19px] pt-[15px] text-[13px] leading-[17.500px] text-[#6d6b50] whitespace-nowrap">
        <span className="text-[#f00]">1</span> Пароль должен быть не менее 10 символов длиной, содержать латинские символы верхнего регистра (A-Z), содержать латинские символы нижнего регистра (a-z), содержать цифры (0-9), содержать знаки пунктуации (,.&lt;&gt;/?;:'"[]<br />
        {'{}'}\|`~!@#$%^&amp;*()-_+=).<br />
        <span className="text-[#f00]">2</span> Для учета параметра, в свойствах рейтинга должен быть включен соответствующий критерий.
      </div>
    </div>
  );
}

function Scrollbar() {
  return (
    <div className="w-[17px] shrink-0 bg-[#f1f1f1] flex flex-col items-center">
      <div className="h-[18px] flex items-center justify-center">
        <span className="w-0 h-0 border-x-[4px] border-x-transparent border-b-[5px] border-b-[#a3a3a3]" />
      </div>
      <div className="w-[15px] ml-[2px] h-[529px] bg-[#c1c1c1]" />
    </div>
  );
}

export default function App() {
  return (
    <div className="w-[1920px] h-[1040px] overflow-hidden flex flex-col">
      <BrowserTab />
      <BrowserBar />
      <div className="flex flex-1 min-h-0">
        <div className="flex-1 min-w-0 flex flex-col">
          <AdminHeader />
          <div className="h-[8px] bg-[#e8eef0]" />
          <div className="h-[1px] bg-[#8b9299]" />
          <div className="flex flex-1 min-h-0">
            <SideRail />
            <NavPanel />
            <Content />
          </div>
        </div>
        <Scrollbar />
      </div>
    </div>
  );
}
